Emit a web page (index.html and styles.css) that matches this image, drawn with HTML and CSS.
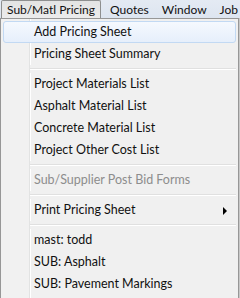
FILE: index.html
```html
<!DOCTYPE html>
<html>
<head>
<meta charset="utf-8">
<link rel="stylesheet" href="styles.css">
</head>
<body>
<div class="screen">
  <div class="menubar">
    <span class="bar-item pressed">Sub/Matl Pricing</span>
    <span class="bar-item">Quotes</span>
    <span class="bar-item">Window</span>
    <span class="bar-item">Job</span>
  </div>
  <div class="menu-wrap">
    <div class="menu">
      <div class="item hover">Add Pricing Sheet</div>
      <div class="item">Pricing Sheet Summary</div>
      <div class="sep"></div>
      <div class="item">Project Materials List</div>
      <div class="item">Asphalt Material List</div>
      <div class="item">Concrete Material List</div>
      <div class="item">Project Other Cost List</div>
      <div class="sep"></div>
      <div class="item disabled">Sub/Supplier Post Bid Forms</div>
      <div class="sep"></div>
      <div class="item sub">Print Pricing Sheet<span class="arrow"></span></div>
      <div class="sep"></div>
      <div class="item">mast: todd</div>
      <div class="item">SUB: Asphalt</div>
      <div class="item">SUB: Pavement Markings</div>
    </div>
    <div class="edge"></div>
  </div>
</div>
</body>
</html>
```

FILE: styles.css
```css
html, body {
  margin: 0;
  padding: 0;
  background: #3a3a3a;
}
.screen {
  width: 240px;
  height: 298px;
  overflow: hidden;
  font-family: Lato, "Noto Sans", sans-serif;
  font-size: 12.5px;
  color: #111;
}
.menubar {
  height: 18px;
  background: linear-gradient(#e4eaf3, #dde5f0);
  display: flex;
  align-items: stretch;
  padding-left: 1px;
  white-space: nowrap;
  font-size: 12px;
}
.bar-item {
  display: flex;
  align-items: center;
  padding: 0 6px 0 7px;
  line-height: 17px;
}
.bar-item.pressed {
  border: 1px solid #8e8f8f;
  border-bottom: none;
  border-radius: 2px 2px 0 0;
  background: linear-gradient(#e3e3e3, #ececec);
  padding: 0 5px;
  margin-right: 2px;
}
.menu-wrap {
  display: flex;
  height: 280px;
}
.menu {
  width: 233px;
  height: 275px;
  border: 1px solid #979797;
  padding: 2px;
  background: linear-gradient(to right, #f1f1f1 0, #f1f1f1 28px, #e2e3e3 28px, #e2e3e3 29px, #ffffff 29px, #ffffff 30px, #f0f0f0 30px);
}
.edge {
  flex: 1;
  background: linear-gradient(to right, #c8c8c8 0, #c8c8c8 1px, #2f2f2f 1px);
}
.item {
  position: relative;
  height: 22px;
  line-height: 22px;
  padding-left: 31px;
  box-sizing: border-box;
  white-space: nowrap;
}
.item.hover {
  border: 1px solid #c2d9f3;
  border-radius: 3px;
  background: linear-gradient(#f5f9fe, #e6effb);
  line-height: 20px;
  padding-left: 30px;
}
.item.disabled {
  color: #8d8d8d;
}
.sep {
  height: 8px;
  margin-left: 27px;
  background: linear-gradient(#f0f0f0 0, #f0f0f0 3px, #e0e0e0 3px, #e0e0e0 4px, #ffffff 4px, #ffffff 5px, #f0f0f0 5px);
}
.arrow {
  position: absolute;
  right: 9px;
  top: 8px;
  width: 0;
  height: 0;
  border-top: 4px solid transparent;
  border-bottom: 4px solid transparent;
  border-left: 4px solid #000;
}
```
